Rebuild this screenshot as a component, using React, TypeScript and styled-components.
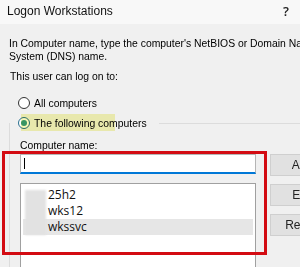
import { createGlobalStyle, styled } from 'styled-components';

const GlobalStyle = createGlobalStyle`
  html, body {
    margin: 0;
    padding: 0;
    background: #f0f0f0;
    overflow: hidden;
  }
`;

const uiFont = `"Liberation Sans", Arial, sans-serif`;

const Window = styled.div`
  position: relative;
  width: 300px;
  height: 267px;
  overflow: hidden;
  background: #f0f0f0;
  font-family: ${uiFont};
  font-size: 10.4px;
  color: #000;
`;

const TitleBar = styled.div`
  display: flex;
  align-items: center;
  justify-content: space-between;
  height: 24px;
  padding: 0 11px 2px 7px;
  box-sizing: border-box;
  background: #f8f8f8;
`;

const Title = styled.div`
  font-family: ${uiFont};
  font-size: 12px;
  color: #111;
`;

const Help = styled.div`
  font-family: "Open Sans", sans-serif;
  font-size: 13px;
  font-weight: 600;
  color: #222;
`;

const Content = styled.div`
  display: flex;
  flex-direction: column;
  padding: 13px 0 0 9px;
`;

const Description = styled.div`
  line-height: 13px;
  white-space: nowrap;
`;

const Prompt = styled.div`
  margin: 7px 0 0 1px;
  line-height: 13px;
`;

const RadioRow = styled.div<{ $top: number }>`
  position: relative;
  display: flex;
  align-items: center;
  gap: 4px;
  height: 16px;
  margin: ${({ $top }) => $top}px 0 0 9px;
  white-space: nowrap;
`;

const RadioCircle = styled.span<{ $checked?: boolean }>`
  display: inline-flex;
  align-items: center;
  justify-content: center;
  width: 12px;
  height: 12px;
  box-sizing: border-box;
  border-radius: 50%;
  background: #fff;
  border: 1px solid ${({ $checked }) => ($checked ? '#2a6f8f' : '#333')};

  &::after {
    content: '';
    display: ${({ $checked }) => ($checked ? 'block' : 'none')};
    width: 6px;
    height: 6px;
    border-radius: 50%;
    background: #3a9a8a;
  }
`;

const Highlight = styled.span`
  position: absolute;
  left: 3px;
  top: -1px;
  width: 94px;
  height: 17px;
  background: #f7f7b8;
  mix-blend-mode: multiply;
`;

const GroupLine = styled.span`
  flex: 1;
  height: 1px;
  margin-left: 8px;
  background: #dcdcdc;
`;

const Group = styled.div`
  display: flex;
  gap: 14px;
  margin: -8px 0 0 0;
  padding: 16px 0 0 10px;
  border-left: 1px solid #dcdcdc;
  height: 160px;
`;

const LeftColumn = styled.div`
  display: flex;
  flex-direction: column;
  flex-shrink: 0;
  width: 236px;
`;

const FieldLabel = styled.div`
  line-height: 13px;
`;

const Input = styled.div`
  display: flex;
  align-items: center;
  height: 20px;
  margin-top: 2px;
  padding-left: 3px;
  box-sizing: border-box;
  background: #fff;
  border: 1px solid #b5b5b5;
  border-bottom: 2px solid #0078d7;
`;

const Caret = styled.span`
  width: 1px;
  height: 11px;
  background: #000;
`;

const ListBox = styled.div`
  display: flex;
  flex-direction: column;
  position: relative;
  margin-top: 9px;
  height: 100px;
  padding: 3px 2px 0 2px;
  background: #fff;
  border: 1px solid #a0a0a0;
`;

const ListItem = styled.div<{ $selected?: boolean }>`
  height: 16px;
  line-height: 16px;
  padding-left: 25px;
  font-family: "Open Sans", sans-serif;
  font-size: 12px;
  color: #111;
  background: ${({ $selected }) => ($selected ? '#e6e6e6' : 'transparent')};
`;

const Blur = styled.div`
  position: absolute;
  left: 4px;
  top: 6px;
  width: 21px;
  height: 45px;
  background: #e2e2e2;
  filter: blur(1px);
`;

const ButtonColumn = styled.div`
  display: flex;
  flex-direction: column;
  flex-shrink: 0;
  gap: 8px;
  padding-top: 15px;
`;

const Button = styled.div`
  display: flex;
  align-items: center;
  justify-content: center;
  width: 75px;
  height: 22px;
  box-sizing: border-box;
  background: #e1e1e1;
  border: 1px solid #cfcfcf;
  font-family: ${uiFont};
  font-size: 12px;
  color: #222;
  flex-shrink: 0;
`;

const Annotation = styled.div`
  position: absolute;
  left: 2px;
  top: 151px;
  width: 265px;
  height: 104px;
  box-sizing: border-box;
  border: 3px solid #d30b12;
  pointer-events: none;
`;

export default function App() {
  return (
    <Window>
      <GlobalStyle />
      <TitleBar>
        <Title>Logon Workstations</Title>
        <Help>?</Help>
      </TitleBar>
      <Content>
        <Description>
          In Computer name, type the computer's NetBIOS or Domain Name
          <br />
          System (DNS) name.
        </Description>
        <Prompt>This user can log on to:</Prompt>
        <RadioRow $top={12}>
          <RadioCircle />
          All computers
        </RadioRow>
        <RadioRow $top={4}>
          <RadioCircle $checked />
          The following computers
          <GroupLine />
          <Highlight />
        </RadioRow>
        <Group>
          <LeftColumn>
            <FieldLabel>Computer name:</FieldLabel>
            <Input>
              <Caret />
            </Input>
            <ListBox>
              <ListItem>25h2</ListItem>
              <ListItem>wks12</ListItem>
              <ListItem $selected>wkssvc</ListItem>
              <Blur />
            </ListBox>
          </LeftColumn>
          <ButtonColumn>
            <Button>Add...</Button>
            <Button>Edit...</Button>
            <Button>Remove</Button>
          </ButtonColumn>
        </Group>
      </Content>
      <Annotation />
    </Window>
  );
}
